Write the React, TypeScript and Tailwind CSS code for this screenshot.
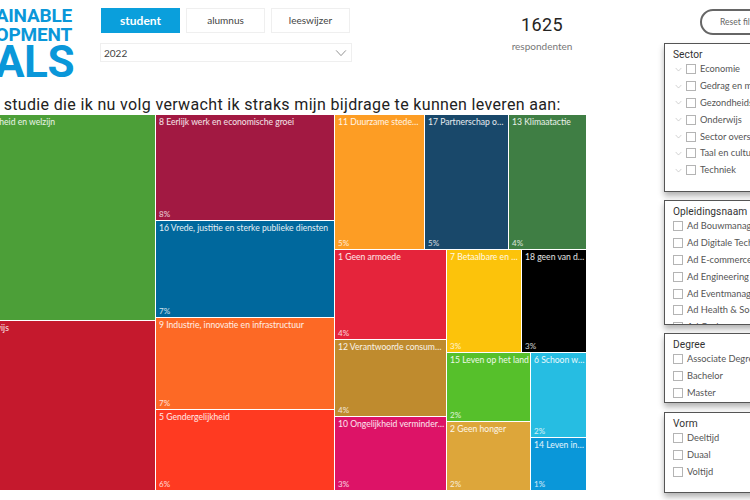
const label = 'Lato, "Noto Sans", sans-serif';

function Cell({ c, t, p, w, h }: { c: string; t: string; p: string; w?: string; h?: string }) {
  return (
    <div className={`${c} ${w ?? ''} ${h ?? ''} flex flex-col justify-between overflow-hidden pl-[3px] pt-[1px] text-white/90 shrink-0`}>
      <div className="text-[8.6px] leading-[13px] whitespace-nowrap truncate pr-[1px]">{t}</div>
      <div className="text-[8px] leading-[11px] text-white/80">{p}</div>
    </div>
  );
}

function Box() {
  return <span className="w-[10px] h-[10px] border border-[#b4b4b4] bg-white shrink-0" />;
}

function Chevron({ className, size }: { className: string; size: number }) {
  return (
    <svg width={size} height={size} viewBox="0 0 16 16" className={`${className} shrink-0`} fill="none" stroke="currentColor" strokeWidth="1.2">
      <path d="M1.5 4.5 8 11.5l6.5-7" />
    </svg>
  );
}

function Panel({ title, items, h, tree, mb }: { title: string; items: string[]; h: string; tree?: boolean; mb: string }) {
  return (
    <div className={`${h} ${mb} w-[140px] border border-[#555] bg-white shadow-[0_4px_6px_rgba(0,0,0,0.3)] overflow-hidden pl-[8px] pt-[4px] shrink-0`}>
      <div className="text-[10.2px] leading-[13px] text-[#333] font-['Roboto'] tracking-[0.05px]">{title}</div>
      <div className="flex flex-col">
        {items.map((i) => (
          <div key={i} className="h-[16.8px] flex items-center text-[9.3px] text-[#555] whitespace-nowrap">
            {tree && <Chevron className="text-[#aaa] mr-[4px] ml-[2px]" size={7} />}
            <Box />
            <span className="ml-[4px]">{i}</span>
          </div>
        ))}
      </div>
    </div>
  );
}

export default function App() {
  return (
    <div className="w-[750px] h-[500px] overflow-hidden bg-white" style={{ fontFamily: label }}>
      <div className="flex ml-[-40px] w-[860px]">
        <div className="w-[704px] shrink-0 flex flex-col">
          <div className="flex h-[95px]">
            <div className="w-[114px] pt-[6px] flex flex-col items-end shrink-0 overflow-hidden text-[#0a97d9] font-['Roboto'] font-bold whitespace-nowrap">
              <div className="text-[19px] leading-[19px] mr-[2px] tracking-[-0.2px]">SUSTAINABLE</div>
              <div className="text-[19px] leading-[19px] mr-[2px] tracking-[-0.2px]">DEVELOPMENT</div>
              <div className="text-[44px] leading-[37px] tracking-[-0.5px]">GOALS</div>
            </div>
            <div className="ml-[27px] pt-[8px] w-[253px] shrink-0">
              <div className="flex gap-[6px]">
                <div className="w-[79px] h-[25px] bg-[#0a9fdc] text-white text-[12px] font-bold flex items-center justify-center">student</div>
                <div className="w-[79px] h-[25px] border border-[#efefef] text-[#444] text-[10px] flex items-center justify-center">alumnus</div>
                <div className="w-[79px] h-[25px] border border-[#efefef] text-[#444] text-[10px] flex items-center justify-center">leeswijzer</div>
              </div>
              <div className="mt-[10px] ml-[-1px] h-[19px] w-[252px] border border-[#efefef] flex items-center justify-between pl-[3px] pr-[4px] pt-[1px] text-[10px] text-[#444]">
                <span>2022</span>
                <Chevron className="text-[#888]" size={12} />
              </div>
            </div>
            <div className="ml-[128px] w-[120px] pt-[13px] flex flex-col items-center shrink-0">
              <div className="text-[18px] leading-[24px] text-[#252423] font-['Roboto'] tracking-[0.4px]">1625</div>
              <div className="text-[10px] leading-[14px] mt-[2px] text-[#777]">respondenten</div>
            </div>
          </div>
          <div className="h-[20px] pl-[3px] text-[16px] leading-[20px] text-[#222] font-['Roboto'] tracking-[0.34px] whitespace-nowrap">
            In de studie die ik nu volg verwacht ik straks mijn bijdrage te kunnen leveren aan:
          </div>
          <div className="flex gap-px h-[375px] w-[627px]">
            <div className="w-[195px] flex flex-col gap-px">
              <Cell c="bg-[#4c9f38]" t="3 Gezondheid en welzijn" p="" h="h-[205px]" />
              <Cell c="bg-[#c5192d]" t="4 Onderwijs" p="" h="h-[169px]" />
            </div>
            <div className="w-[178px] flex flex-col gap-px">
              <Cell c="bg-[#a21942]" t="8 Eerlijk werk en economische groei" p="8%" h="h-[105px]" />
              <Cell c="bg-[#00689d]" t="16 Vrede, justitie en sterke publieke diensten" p="7%" h="h-[96px]" />
              <Cell c="bg-[#fd6925]" t="9 Industrie, innovatie en infrastructuur" p="7%" h="h-[91px]" />
              <Cell c="bg-[#ff3a21]" t="5 Gendergelijkheid" p="6%" h="h-[80px]" />
            </div>
            <div className="w-[251px] flex flex-col gap-px">
              <div className="flex gap-px h-[134px]">
                <Cell c="bg-[#fd9d24]" t="11 Duurzame steden en gemeenschappen" p="5%" w="w-[89px]" />
                <Cell c="bg-[#19486a]" t="17 Partnerschap om doelen te bereiken" p="5%" w="w-[83px]" />
                <Cell c="bg-[#3f7e44]" t="13 Klimaatactie" p="4%" w="w-[77px]" />
              </div>
              <div className="flex gap-px h-[240px]">
                <div className="w-[111px] flex flex-col gap-px">
                  <Cell c="bg-[#e5243b]" t="1 Geen armoede" p="4%" h="h-[89px]" />
                  <Cell c="bg-[#bf8b2e]" t="12 Verantwoorde consumptie en productie" p="4%" h="h-[76px]" />
                  <Cell c="bg-[#dd1367]" t="10 Ongelijkheid verminderen in en tussen landen" p="3%" h="h-[73px]" />
                </div>
                <div className="w-[139px] flex flex-col gap-px">
                  <div className="flex gap-px h-[102px]">
                    <Cell c="bg-[#fcc30b]" t="7 Betaalbare en duurzame energie" p="3%" w="w-[74px]" />
                    <Cell c="bg-[#000000]" t="18 geen van deze doelen" p="3%" w="w-[64px]" />
                  </div>
                  <div className="flex gap-px h-[137px]">
                    <div className="w-[83px] flex flex-col gap-px">
                      <Cell c="bg-[#56c02b]" t="15 Leven op het land" p="2%" h="h-[68px]" />
                      <Cell c="bg-[#dda63a]" t="2 Geen honger" p="2%" h="h-[68px]" />
                    </div>
                    <div className="w-[55px] flex flex-col gap-px">
                      <Cell c="bg-[#26bde2]" t="6 Schoon water en sanitair" p="2%" h="h-[84px]" />
                      <Cell c="bg-[#0a97d9]" t="14 Leven in het water" p="1%" h="h-[52px]" />
                    </div>
                  </div>
                </div>
              </div>
            </div>
          </div>
        </div>
        <div className="w-[150px] shrink-0 flex flex-col">
          <div className="h-[43px] pt-[9px] pl-[36px]">
            <div className="w-[110px] h-[26px] border-2 border-[#666] rounded-[13px] text-[8.5px] text-[#666] flex items-center pl-[18px] whitespace-nowrap">Reset filters</div>
          </div>
          <Panel title="Sector" h="h-[149px]" mb="mb-[8px]" tree items={["Economie", "Gedrag en maatschappij", "Gezondheidszorg", "Onderwijs", "Sector overstijgend", "Taal en cultuur", "Techniek"]} />
          <Panel title="Opleidingsnaam" h="h-[125px]" mb="mb-[8px]" items={["Ad Bouwmanagement", "Ad Digitale Technieken", "Ad E-commerce", "Ad Engineering", "Ad Eventmanagement", "Ad Health & Social", "Ad Ondernemen"]} />
          <Panel title="Degree" h="h-[70px]" mb="mb-[9px]" items={["Associate Degree", "Bachelor", "Master"]} />
          <Panel title="Vorm" h="h-[81px]" mb="" items={["Deeltijd", "Duaal", "Voltijd"]} />
        </div>
      </div>
    </div>
  );
}
